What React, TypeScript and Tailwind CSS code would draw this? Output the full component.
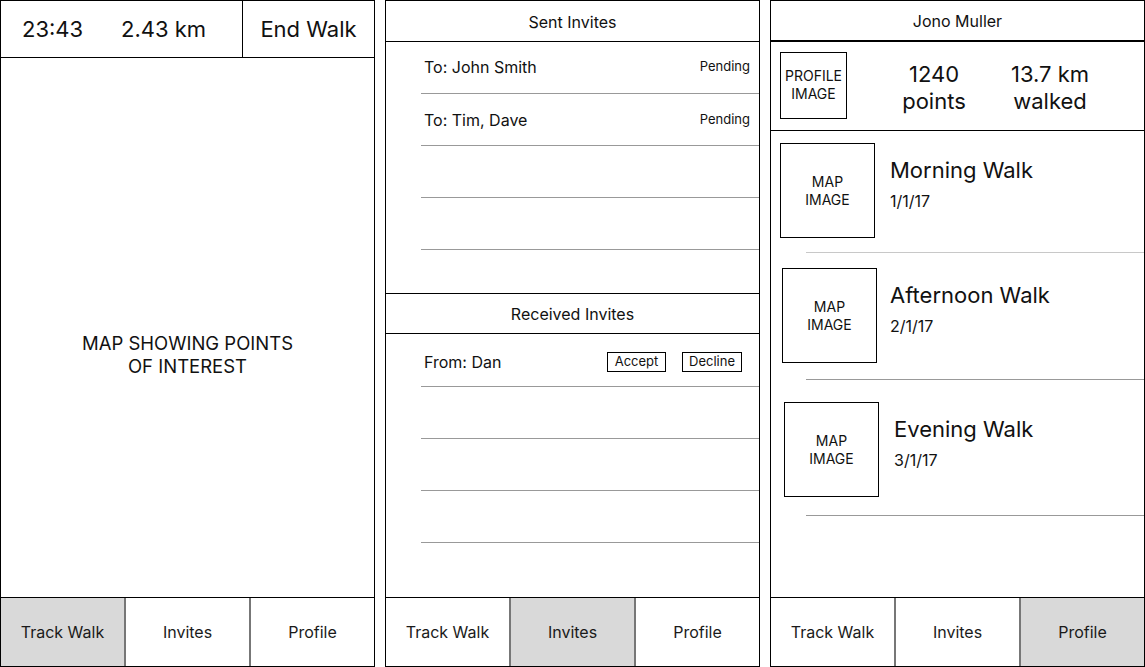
import React from 'react'

const font = { fontFamily: 'Inter, "Liberation Sans", sans-serif' }

function TabBar({ active }: { active: number }) {
  const tabs = ['Track Walk', 'Invites', 'Profile']
  return (
    <div className="h-[69px] border-t border-black flex">
      {tabs.map((t, i) => (
        <div
          key={t}
          className={
            'flex-1 flex items-center justify-center text-[16px] text-[#1a1a1a] ' +
            (i < 2 ? 'border-r-2 border-[#777] ' : '') +
            (i === active ? 'bg-[#d9d9d9]' : 'bg-white')
          }
        >
          {t}
        </div>
      ))}
    </div>
  )
}

function TrackPanel() {
  return (
    <div className="w-[375px] h-[667px] border border-black flex flex-col shrink-0">
      {/* Header */}
      <div className="h-[57px] border-b border-black flex text-[22px] text-[#111]">
        <div className="w-[242px] border-r border-black flex items-center pl-[21px]">
          <span className="w-[99px]">23:43</span>
          <span>2.43 km</span>
        </div>
        <div className="flex-1 flex items-center justify-center">End Walk</div>
      </div>

      {/* Map */}
      <div className="flex-1 pt-[274px] text-center text-[18.5px] leading-[23px] text-[#111]">
        MAP SHOWING POINTS
        <br />
        OF INTEREST
      </div>

      <TabBar active={0} />
    </div>
  )
}

function InviteRow({ children, h = 'h-[52px]' }: { children?: React.ReactNode; h?: string }) {
  return (
    <div className={h + ' ml-[35px] border-b border-[#999] flex items-center pl-[3px]'}>{children}</div>
  )
}

function InvitesPanel() {
  return (
    <div className="w-[375px] h-[667px] border border-black flex flex-col shrink-0 text-[#111]">
      {/* Sent */}
      <div className="h-[292px] flex flex-col">
        <div className="h-[41px] border-b border-black flex items-center justify-center pt-[2px] text-[16px]">
          Sent Invites
        </div>
        <InviteRow>
          <span className="flex-1 text-[16px] -mt-[2px]">To: John Smith</span>
          <span className="text-[13px] pr-[9px] -mt-[2px]">Pending</span>
        </InviteRow>
        <InviteRow>
          <span className="flex-1 text-[16px]">To: Tim, Dave</span>
          <span className="text-[13px] pr-[9px]">Pending</span>
        </InviteRow>
        <InviteRow />
        <InviteRow />
      </div>

      {/* Received */}
      <div className="h-[41px] border-y border-black flex items-center justify-center pt-[1px] text-[16px]">
        Received Invites
      </div>
      <InviteRow h="h-[53px] pt-[3px]">
        <span className="flex-1 text-[16px]">From: Dan</span>
        <span className="w-[59px] h-[20px] border border-black flex items-center justify-center text-[13px]">
          Accept
        </span>
        <span className="w-[60px] h-[20px] border border-black flex items-center justify-center text-[13px] ml-[16px] mr-[17px]">
          Decline
        </span>
      </InviteRow>
      <InviteRow />
      <InviteRow />
      <InviteRow />
      <div className="flex-1" />

      <TabBar active={1} />
    </div>
  )
}

interface Walk {
  title: string
  date: string
  pt: string
  pb: string
  ml: string
  gap: string
  line: string
}

const walks: Walk[] = [
  { title: 'Morning Walk', date: '1/1/17', pt: 'pt-[12px]', pb: 'pb-[14px]', ml: 'ml-[9px]', gap: 'ml-[15px]', line: 'bg-[#c8c8c8]' },
  { title: 'Afternoon Walk', date: '2/1/17', pt: 'pt-[15px]', pb: 'pb-[16px]', ml: 'ml-[11px]', gap: 'ml-[13px]', line: 'bg-[#999]' },
  { title: 'Evening Walk', date: '3/1/17', pt: 'pt-[22px]', pb: 'pb-[18px]', ml: 'ml-[13px]', gap: 'ml-[15px]', line: 'bg-[#999]' },
]

function ProfilePanel() {
  return (
    <div className="w-[375px] h-[667px] border border-black flex flex-col shrink-0 text-[#111]">
      <div className="h-[41px] border-b-2 border-black flex items-center justify-center pt-[1px] text-[16px]">
        Jono Muller
      </div>

      {/* Profile summary */}
      <div className="h-[89px] border-b border-black flex items-center">
        <div className="ml-[9px] -mt-[2px] w-[67px] h-[67px] border border-black flex items-center justify-center text-center text-[14px] leading-[18px]">
          PROFILE
          <br />
          IMAGE
        </div>
        <div className="ml-[27px] mt-[3px] w-[120px] text-center text-[22px] leading-[27px]">
          1240
          <br />
          points
        </div>
        <div className="mt-[3px] w-[112px] text-center text-[22px] leading-[27px]">
          13.7 km
          <br />
          walked
        </div>
      </div>

      {/* Walks */}
      {walks.map((w) => (
        <div key={w.title}>
          <div className={'flex ' + w.pt + ' ' + w.pb}>
            <div
              className={
                w.ml +
                ' w-[95px] h-[95px] border border-black flex items-center justify-center text-center text-[14px] leading-[18px] shrink-0'
              }
            >
              MAP
              <br />
              IMAGE
            </div>
            <div className={w.gap + ' flex flex-col'}>
              <div className="mt-[13px] text-[22px] leading-[28px]">{w.title}</div>
              <div className="mt-[7px] text-[16px] leading-[20px]">{w.date}</div>
            </div>
          </div>
          <div className={'ml-[35px] h-px ' + w.line} />
        </div>
      ))}
      <div className="flex-1" />

      <TabBar active={2} />
    </div>
  )
}

export default function App() {
  return (
    <div className="w-[1145px] h-[667px] bg-white flex gap-[10px]" style={font}>
      <TrackPanel />
      <InvitesPanel />
      <ProfilePanel />
    </div>
  )
}
